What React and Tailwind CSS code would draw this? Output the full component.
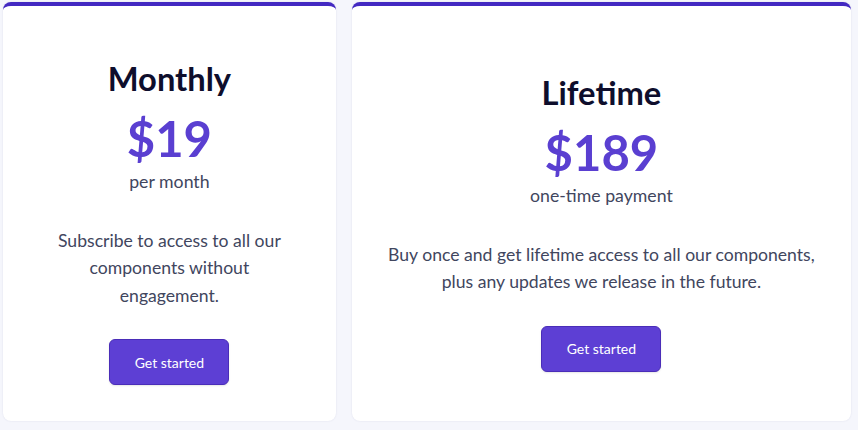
export default function App() {
  const plans = [
    {
      name: 'Monthly',
      price: '$19',
      period: 'per month',
      text: 'Subscribe to access to all our components without engagement.',
      grow: 'flex-[2]',
      textWidth: 'max-w-[250px]',
    },
    {
      name: 'Lifetime',
      price: '$189',
      period: 'one-time payment',
      text: 'Buy once and get lifetime access to all our components, plus any updates we release in the future.',
      grow: 'flex-[3]',
      textWidth: 'max-w-[450px]',
    },
  ]

  return (
    <div
      className="flex h-[430px] w-[858px] gap-4 bg-[#f5f6fc] pb-[9px] pl-[3px] pr-[7px] pt-[2px]"
      style={{ fontFamily: 'Lato, "Open Sans", sans-serif' }}
    >
      {plans.map((plan) => (
        <div
          key={plan.name}
          className={`${plan.grow} flex flex-col items-center justify-center rounded-lg border-t-4 border-[#4329c2] bg-white pt-[17px] text-center shadow-[0_0_2px_rgba(60,60,120,0.12)]`}
        >
          <h2 className="text-[32.7px] font-bold leading-[40px] text-[#0e0e2c]">{plan.name}</h2>
          <p className="mt-[11px] text-[49px] font-bold leading-[56px] text-[#5a3fd1]">{plan.price}</p>
          <p className="mt-[3px] text-[17.7px] leading-[26px] text-[#41465e]">{plan.period}</p>
          <p className={`${plan.textWidth} mt-[32px] text-[17.6px] leading-[27.5px] text-[#41465e]`}>
            {plan.text}
          </p>
          <button className="mt-[30px] h-[46px] w-[120px] rounded-md border border-[#4a2db8] bg-[#5d3fd4] text-[14px] text-white shadow-[0_1px_2px_rgba(0,0,0,0.1)]">
            Get started
          </button>
        </div>
      ))}
    </div>
  )
}
